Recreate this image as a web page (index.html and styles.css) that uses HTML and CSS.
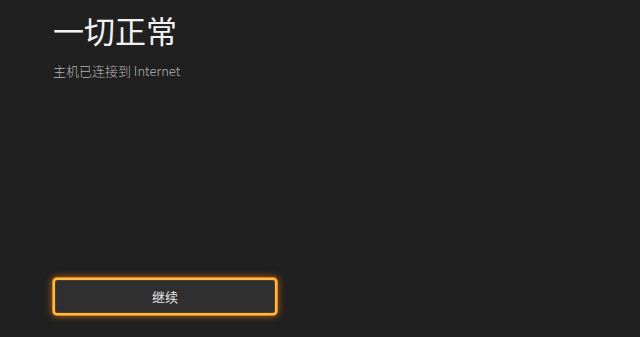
FILE: index.html
```html
<!DOCTYPE html>
<html lang="zh-CN">
<head>
<meta charset="utf-8">
<link rel="stylesheet" href="styles.css">
</head>
<body>
<main class="page">
  <header class="intro">
    <h1 class="title">一切正常</h1>
    <p class="subtitle">主机已连接到 Internet</p>
  </header>
  <div class="actions">
    <button class="btn" type="button">继续</button>
  </div>
</main>
</body>
</html>
```
FILE: styles.css
```css
html, body {
  margin: 0;
  padding: 0;
  background: #202020;
  width: 640px;
  height: 337px;
  overflow: hidden;
}
.page {
  box-sizing: border-box;
  height: 337px;
  padding: 10px 0 0 53px;
  display: flex;
  flex-direction: column;
  font-family: "Noto Sans CJK SC", "Noto Sans", sans-serif;
}
.title {
  margin: 0;
  font-size: 31px;
  line-height: 40px;
  font-weight: 400;
  color: #f2f2f2;
}
.subtitle {
  margin: 12px 0 0 0;
  font-size: 13px;
  line-height: 17px;
  font-weight: 300;
  color: #b4b4b4;
}
.actions {
  margin-top: auto;
  padding-bottom: 22px;
}
.btn {
  box-sizing: border-box;
  width: 224px;
  height: 37px;
  border: 2px solid #ffb84a;
  border-radius: 4px;
  background: #2f2f2f;
  color: #e8e8e8;
  font-family: "Noto Sans CJK SC", "Noto Sans", sans-serif;
  font-size: 13px;
  box-shadow: 0 0 0 1px #e0830f, 0 0 6px 2px rgba(225, 120, 15, 0.55), inset 0 0 2px rgba(240, 140, 30, 0.6);
  cursor: pointer;
}
```
